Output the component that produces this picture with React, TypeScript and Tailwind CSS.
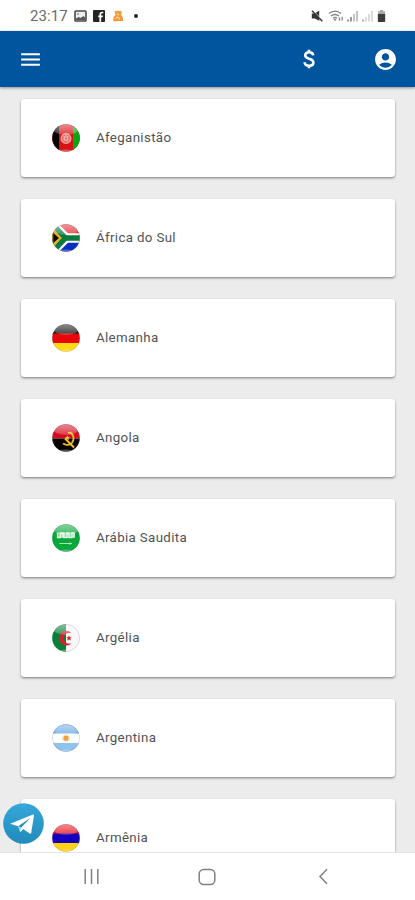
import React from 'react';
import { MdAccountCircle, MdMenu } from 'react-icons/md';

interface Country {
  id: string;
  name: string;
  flag: React.ReactNode;
}

const countries: Country[] = [
  {
    id: 'af',
    name: 'Afeganistão',
    flag: (
      <>
        <rect width="28" height="28" fill="#d81114" />
        <rect width="7" height="28" fill="#050505" />
        <rect x="21" width="7" height="28" fill="#08a80d" />
        <circle cx="14" cy="14.5" r="4.8" fill="#e36a66" stroke="#f3aba6" strokeWidth="1.3" />
        <path d="M12.2 12v4.2h3.6V12M14 11v3" fill="none" stroke="#f6c5c0" strokeWidth="1" />
      </>
    ),
  },
  {
    id: 'za',
    name: 'África do Sul',
    flag: (
      <>
        <rect width="28" height="14" fill="#e5262b" />
        <rect y="14" width="28" height="14" fill="#0a2fc0" />
        <path d="M0 0L14 14L0 28M13 14H28" fill="none" stroke="#fff" strokeWidth="9.5" />
        <path d="M0 6L8.5 14L0 22Z" fill="#080808" stroke="#e8b21c" strokeWidth="2.4" />
        <path d="M1 1L13.5 14L1 27M12 14H28" fill="none" stroke="#0b7a3c" strokeWidth="5.4" />
      </>
    ),
  },
  {
    id: 'de',
    name: 'Alemanha',
    flag: (
      <>
        <rect width="28" height="10" fill="#111" />
        <rect y="9.5" width="28" height="10" fill="#e80606" />
        <rect y="19" width="28" height="9" fill="#ffdc12" />
      </>
    ),
  },
  {
    id: 'ao',
    name: 'Angola',
    flag: (
      <>
        <rect width="28" height="14.5" fill="#d50c20" />
        <rect y="14.5" width="28" height="14" fill="#080404" />
        <path d="M16 9C20.5 7.5 23.5 14 20 18.8C17.5 21.5 14 21.2 11 19.5" fill="none" stroke="#e8b920" strokeWidth="1.8" />
        <path d="M13 14.5L22 23.5" stroke="#f0c828" strokeWidth="1.8" />
        <path d="M15.5 11.5l.8 1.5 1.6.2-1.2 1.2.3 1.6-1.5-.8-1.5.8.3-1.6-1.2-1.2 1.6-.2z" fill="#f0c828" />
      </>
    ),
  },
  {
    id: 'sa',
    name: 'Arábia Saudita',
    flag: (
      <>
        <rect width="28" height="28" fill="#07a83a" />
        <rect x="5" y="8.5" width="18" height="5.5" fill="#8fd9a4" />
        <path d="M5.5 9v4.5h3V9.5M8 9h3v4.5M12 8.5v5h3V10M14 9h3M17 8.5v5h3V9.5M19 9h3v4.5" fill="none" stroke="#e3f7e8" strokeWidth="1.3" />
        <path d="M7.5 19.5H20M18 18.3v2.5" fill="none" stroke="#a5e5b4" strokeWidth="1.1" />
      </>
    ),
  },
  {
    id: 'dz',
    name: 'Argélia',
    flag: (
      <>
        <rect width="14" height="28" fill="#078038" />
        <rect x="14" width="14" height="28" fill="#f9f9f9" />
        <path d="M18.6 8.6A7 7 0 1 0 18.6 19.8A5.8 5.8 0 1 1 18.6 8.6Z" fill="#d8202c" stroke="#d8202c" strokeWidth=".6" />
        <path d="M17 11.3l.8 1.9 2.1.1-1.6 1.3.5 2-1.8-1.1-1.8 1.1.5-2-1.6-1.3 2.1-.1z" fill="#d8202c" />
      </>
    ),
  },
  {
    id: 'ar',
    name: 'Argentina',
    flag: (
      <>
        <rect width="28" height="28" fill="#fff" />
        <rect width="28" height="9.5" fill="#68aae3" />
        <rect y="19" width="28" height="9" fill="#8fc3ec" />
        <circle cx="14" cy="14.2" r="3.6" fill="none" stroke="#f3cf98" strokeWidth="1" strokeDasharray="1 .8" />
        <circle cx="14" cy="14.2" r="2.7" fill="#eda23e" />
      </>
    ),
  },
  {
    id: 'am',
    name: 'Armênia',
    flag: (
      <>
        <rect width="28" height="10" fill="#e81018" />
        <rect y="9.5" width="28" height="10" fill="#1600bd" />
        <rect y="19" width="28" height="9" fill="#ffd414" />
      </>
    ),
  },
];

const Flag: React.FC<{ id: string; children: React.ReactNode }> = ({ id, children }) => (
  <svg viewBox="0 0 28 28" className="h-7 w-7 shrink-0">
    <defs>
      <clipPath id={`clip-${id}`}>
        <circle cx="14" cy="14" r="13.8" />
      </clipPath>
      <linearGradient id={`gloss-${id}`} x1="0" y1="0" x2="0" y2="1">
        <stop offset="0" stopColor="#fff" stopOpacity=".55" />
        <stop offset="1" stopColor="#fff" stopOpacity=".2" />
      </linearGradient>
    </defs>
    <g clipPath={`url(#clip-${id})`}>
      {children}
      <ellipse cx="14" cy="5" rx="12.5" ry="6" fill={`url(#gloss-${id})`} />
      <ellipse cx="14" cy="28" rx="9" ry="2.5" fill="#fff" fillOpacity=".3" />
    </g>
    <circle cx="14" cy="14" r="13.5" fill="none" stroke="#667" strokeOpacity=".28" strokeWidth=".8" />
  </svg>
);

const CountryCard: React.FC<{ country: Country }> = ({ country }) => (
  <li className="flex h-[78px] shrink-0 items-center gap-[16.5px] rounded-[3px] bg-white pl-[30.5px] shadow-[0_1px_2px_rgba(0,0,0,0.36),0_2px_3px_rgba(0,0,0,0.12)]">
    <Flag id={country.id}>{country.flag}</Flag>
    <span className="text-[13.3px] leading-5 tracking-[0.35px] text-[#4f5356]">{country.name}</span>
  </li>
);

const StatusBar = () => (
  <div className="flex h-[31px] shrink-0 items-center justify-between bg-white pr-[29px] pl-[30px]">
    <div className="flex items-center">
      <span className="w-[44px] text-[15px] leading-5 tracking-[0.1px] text-[#6a6a6a]">23:17</span>
      <svg viewBox="0 0 13 12" className="h-3 w-[13px]">
        <rect x="1" y="1" width="11" height="10" rx=".8" fill="#eee" stroke="#484848" strokeWidth="1.6" />
        <path d="M2 10V8.5l2.5-1.5 2 1L9.5 6 11 7.5V10z" fill="#555" />
        <circle cx="4" cy="4" r=".8" fill="#555" />
      </svg>
      <svg viewBox="0 0 12 12" className="ml-1.5 h-3 w-3">
        <rect width="12" height="12" rx="1" fill="#242424" />
        <path d="M7.3 12V4.2Q7.3 2.5 9 2.5h1.3M5.2 6.4h4.6" fill="none" stroke="#fff" strokeWidth="1.7" />
      </svg>
      <svg viewBox="0 0 10 12" className="ml-2 h-3 w-2.5">
        <path d="M1.5 1L4.5.8 8.5 1v4.5L10 8v3H5.2L1 11.4 0 10l.8-3.5L2.5 5z" fill="#f39a3d" />
        <path d="M4 3.5l2 1.5M2.5 8.5C4 6.5 6 7 6.5 9.5" fill="none" stroke="#fff3df" strokeWidth="1" />
      </svg>
      <span className="ml-[11px] h-1 w-1 rounded-full bg-[#222]" />
    </div>
    <div className="flex items-center">
      <svg viewBox="0 0 12 12" className="h-3 w-3">
        <path d="M.8 3.6h3L8.2.6v10.2L3.8 8.4h-3z" fill="#333" />
        <path d="M2.2.8L12 10.6" stroke="#fff" strokeWidth=".9" />
        <path d="M1 .8L11.3 11.3" stroke="#3a3a3a" strokeWidth="1.5" />
      </svg>
      <svg viewBox="0 0 16 12" className="ml-[5px] h-3 w-4">
        <path d="M1 3.5Q7 -1.2 13 3.5M3 6Q7 3 11 6M5 8.3Q7 6.8 9 8.3" fill="none" stroke="#808080" strokeWidth="1.4" />
        <path d="M5.5 9.2h3L7 11z" fill="#666" />
        <path d="M11.5 10.8V7.5M14.2 6.8v3.6" stroke="#888" strokeWidth="1.3" />
      </svg>
      <svg viewBox="0 0 11 12" className="ml-[3px] h-3 w-[11px]">
        <path d="M1 11.5v-2M4 11.5V7" stroke="#808080" strokeWidth="1.6" />
        <path d="M7 11.5V4M10 11.5V1" stroke="#b6b6b6" strokeWidth="1.6" />
      </svg>
      <svg viewBox="0 0 11 12" className="ml-[4px] h-3 w-[11px]">
        <path d="M1 11.5v-2" stroke="#999" strokeWidth="1.6" />
        <path d="M4 11.5V7M7 11.5V4M10 11.5V1" stroke="#d2d2d2" strokeWidth="1.6" />
      </svg>
      <svg viewBox="0 0 9 12" className="ml-1 h-3 w-[9px]">
        <path d="M3 0h3v1.3h2V4H1V1.3h2z" fill="#aaa" />
        <path d="M.8 4h7.4v7.2q0 .8-.8.8H1.6q-.8 0-.8-.8z" fill="#3c3c3c" />
      </svg>
    </div>
  </div>
);

const TopBar = () => (
  <header className="z-10 flex h-14 shrink-0 items-center bg-[#00569e] pr-[17px] pl-[18px] text-white shadow-[0_1px_3px_rgba(0,0,0,0.4)]">
    <button aria-label="Menu" className="mr-auto">
      <MdMenu className="h-[25px] w-[25px]" />
    </button>
    <button aria-label="Moeda" className="mr-[58px]">
      <svg viewBox="0 0 12 20" className="h-5 w-3">
        <path
          d="M10.2 6.3C10 4.3 8.3 3.3 6.1 3.3C3.8 3.3 2.2 4.4 2.2 6.3C2.2 8.2 3.8 9 6.1 9.7C8.7 10.4 10.4 11.4 10.4 13.5C10.4 15.5 8.7 16.7 6.2 16.7C3.6 16.7 1.7 15.5 1.6 13.2M6 .8V3.6M6 16.4V19.2"
          fill="none"
          stroke="currentColor"
          strokeWidth="2.6"
        />
      </svg>
    </button>
    <button aria-label="Conta">
      <MdAccountCircle className="h-[25px] w-[25px]" />
    </button>
  </header>
);

const TelegramButton = () => (
  <button aria-label="Telegram" className="absolute top-[716px] left-[3px] h-[41px] w-[41px]">
    <svg viewBox="0 0 41 41" className="h-full w-full">
      <defs>
        <linearGradient id="telegram" x1="0" y1="0" x2="0" y2="1">
          <stop offset="0" stopColor="#35a8da" />
          <stop offset="1" stopColor="#208abb" />
        </linearGradient>
      </defs>
      <circle cx="20.5" cy="20.5" r="20.3" fill="url(#telegram)" />
      <path d="M7.2 20.8L30 11.6Q31.2 11.2 31 12.5L28.2 30Q27.8 31.2 26.7 30.5L20.2 26L17.3 29.2L15.2 23.3Z" fill="#fff" />
      <path d="M15.2 23.3L27 15.2L18.2 24.6L17.3 29.2Z" fill="#a9d3e7" />
      <path d="M15.2 23.3L27 15.2L18.2 24.6Z" fill="#278fbe" />
    </svg>
  </button>
);

const NavigationBar = () => (
  <nav className="flex h-[47px] shrink-0 items-center bg-white pl-[83px] text-[#808080]">
    <svg viewBox="0 0 17 17" className="h-[17px] w-[17px]">
      <path d="M2.2 1v15M8.5 1v15M14.8 1v15" stroke="currentColor" strokeWidth="1.5" />
    </svg>
    <svg viewBox="0 0 18 18" className="ml-[98px] h-[18px] w-[18px]">
      <rect x="1.2" y="1.4" width="15.6" height="15.2" rx="4.5" fill="none" stroke="currentColor" strokeWidth="1.5" />
    </svg>
    <svg viewBox="0 0 11 17" className="ml-[102px] h-[17px] w-[11px]">
      <path d="M9 1.3L2 8.5L9 15.7" fill="none" stroke="currentColor" strokeWidth="1.5" />
    </svg>
  </nav>
);

const App = () => {
  return (
    <div className="flex h-screen w-full flex-col overflow-hidden bg-white font-['Roboto',sans-serif]">
      <StatusBar />
      <TopBar />
      <main className="relative min-h-0 flex-1 overflow-hidden border-b border-[#e2e2e2] bg-[#ececec]">
        <ul className="flex flex-col gap-[22px] pt-[11.5px] pr-5 pl-[21px]">
          {countries.map((country) => (
            <CountryCard key={country.id} country={country} />
          ))}
        </ul>
        <TelegramButton />
      </main>
      <NavigationBar />
    </div>
  );
};

export default App;
